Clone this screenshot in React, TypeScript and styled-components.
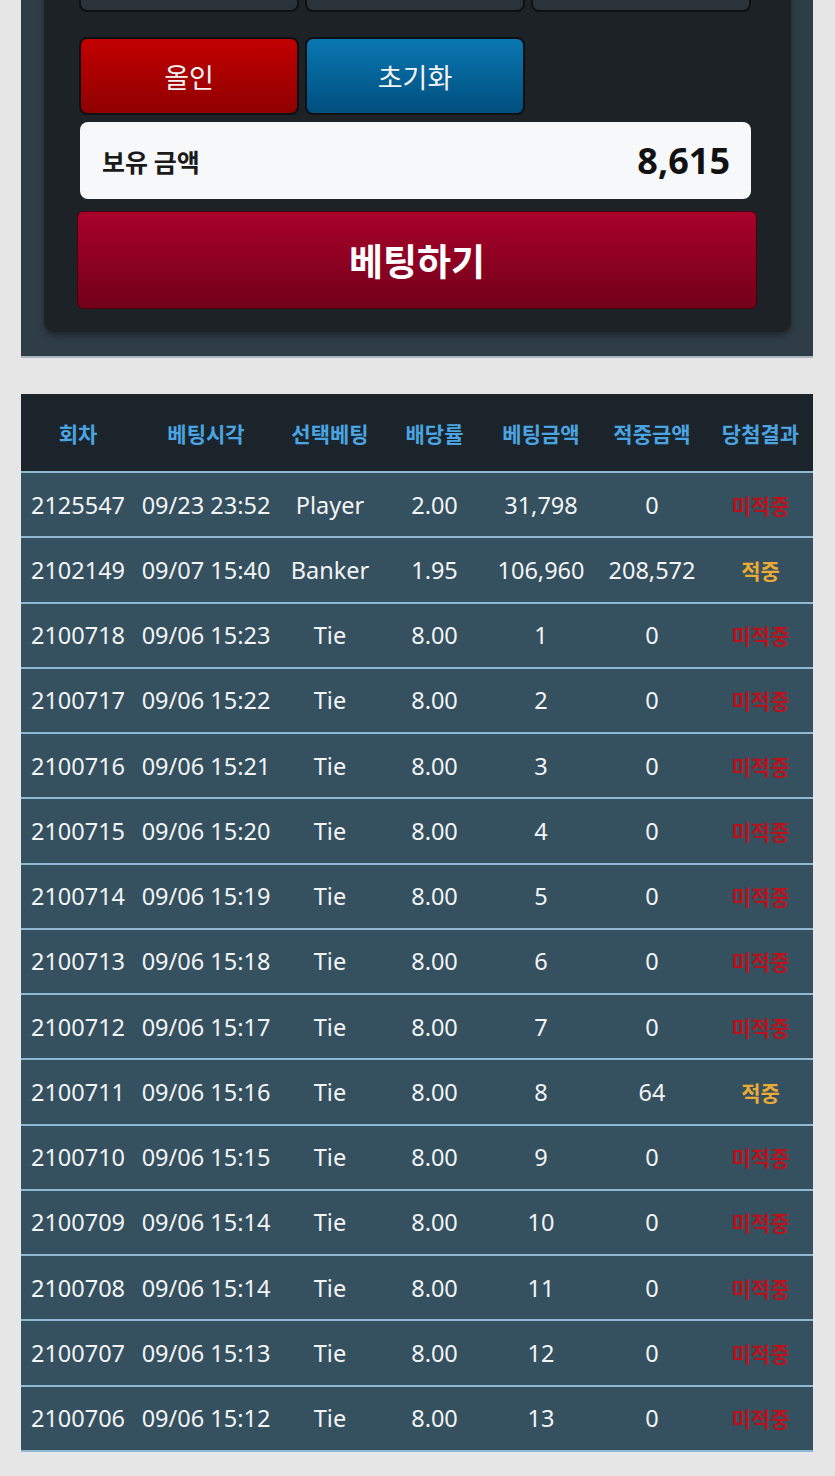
import React from "react";
import styled, { createGlobalStyle } from "styled-components";

const GlobalStyle = createGlobalStyle`
  body {
    margin: 0;
    background: #e6e6e6;
    font-family: "Noto Sans", "Noto Sans CJK KR", sans-serif;
  }
`;

const Page = styled.div`
  width: 835px;
  height: 1476px;
  overflow: hidden;
  padding: 0 22px 0 21px;
  box-sizing: border-box;
`;

const Panel = styled.div`
  background: #2f3d47;
  margin-top: -66px;
  padding: 0 22px 24px 23px;
  border-bottom: 2px solid #aab6be;
`;

const Card = styled.div`
  background: #1c2226;
  border-radius: 0 0 10px 10px;
  padding: 0 34px 23px 33px;
  box-shadow: 0 4px 6px rgba(0, 0, 0, 0.35);
  display: flex;
  flex-direction: column;
`;

const ButtonRow = styled.div<{ $mt: number }>`
  display: flex;
  gap: 6px;
  padding-left: 2px;
  margin-top: ${(p) => p.$mt}px;
`;

const ChipButton = styled.div<{ $variant: "chip" | "red" | "blue" }>`
  width: 220px;
  height: 78px;
  box-sizing: border-box;
  border-radius: 8px;
  border: 2px solid #0d1114;
  display: flex;
  align-items: center;
  justify-content: center;
  font-family: "Noto Sans CJK KR", sans-serif;
  font-size: 27px;
  color: #f4f4f4;
  background: ${(p) =>
    p.$variant === "red"
      ? "linear-gradient(#c30000, #8e0000)"
      : p.$variant === "blue"
      ? "linear-gradient(#0a77b2, #004f7e)"
      : "linear-gradient(#353d44, #2b3237)"};
`;

const Balance = styled.div`
  margin: 7px 6px 0 3px;
  height: 77px;
  background: #f7f8f9;
  border-radius: 8px;
  display: flex;
  align-items: center;
  justify-content: space-between;
  padding: 0 21px 0 22px;
`;

const BalanceLabel = styled.span`
  font-family: "Noto Sans CJK KR", sans-serif;
  font-weight: 700;
  font-size: 25px;
  color: #1a1a1a;
`;

const BalanceValue = styled.span`
  font-family: "Noto Sans", sans-serif;
  font-weight: 700;
  font-size: 36px;
  color: #111;
`;

const BetButton = styled.div`
  margin-top: 12px;
  height: 98px;
  box-sizing: border-box;
  border-radius: 6px;
  border: 1px solid #4a0010;
  background: linear-gradient(#a9022a, #72001a);
  display: flex;
  align-items: center;
  justify-content: center;
  font-family: "Noto Sans CJK KR", sans-serif;
  font-weight: 700;
  font-size: 37px;
  color: #fff;
`;

const Table = styled.table`
  margin-top: 36px;
  width: 792px;
  border-collapse: collapse;
  table-layout: fixed;
`;

const HeadCell = styled.th`
  height: 77px;
  background: #1b242a;
  color: #4ba4e2;
  font-family: "Noto Sans CJK KR", sans-serif;
  font-weight: 700;
  font-size: 21px;
  text-align: center;
  padding: 0;
  white-space: nowrap;
  border-bottom: 2px solid #8fb8d2;
`;

const Cell = styled.td`
  height: 63.25px;
  background: #35505f;
  color: #f2f4f6;
  font-family: "Noto Sans", "Noto Sans CJK KR", sans-serif;
  font-size: 23.5px;
  text-align: center;
  padding: 0;
  white-space: nowrap;
  border-bottom: 2px solid #8fb8d2;
`;

const Result = styled.span<{ $win: boolean }>`
  font-family: "Noto Sans CJK KR", sans-serif;
  font-weight: 700;
  font-size: 21px;
  color: ${(p) => (p.$win ? "#e9aa36" : "#b8131d")};
`;

const columns = [
  { title: "회차", width: 114 },
  { title: "베팅시각", width: 142 },
  { title: "선택베팅", width: 106 },
  { title: "배당률", width: 103 },
  { title: "베팅금액", width: 110 },
  { title: "적중금액", width: 112 },
  { title: "당첨결과", width: 105 },
];

const rows = [
  ["2125547", "09/23 23:52", "Player", "2.00", "31,798", "0", false],
  ["2102149", "09/07 15:40", "Banker", "1.95", "106,960", "208,572", true],
  ["2100718", "09/06 15:23", "Tie", "8.00", "1", "0", false],
  ["2100717", "09/06 15:22", "Tie", "8.00", "2", "0", false],
  ["2100716", "09/06 15:21", "Tie", "8.00", "3", "0", false],
  ["2100715", "09/06 15:20", "Tie", "8.00", "4", "0", false],
  ["2100714", "09/06 15:19", "Tie", "8.00", "5", "0", false],
  ["2100713", "09/06 15:18", "Tie", "8.00", "6", "0", false],
  ["2100712", "09/06 15:17", "Tie", "8.00", "7", "0", false],
  ["2100711", "09/06 15:16", "Tie", "8.00", "8", "64", true],
  ["2100710", "09/06 15:15", "Tie", "8.00", "9", "0", false],
  ["2100709", "09/06 15:14", "Tie", "8.00", "10", "0", false],
  ["2100708", "09/06 15:14", "Tie", "8.00", "11", "0", false],
  ["2100707", "09/06 15:13", "Tie", "8.00", "12", "0", false],
  ["2100706", "09/06 15:12", "Tie", "8.00", "13", "0", false],
] as const;

const App = () => {
  return (
    <Page>
      <GlobalStyle />
      <Panel>
        <Card>
          <ButtonRow $mt={0}>
            <ChipButton $variant="chip" />
            <ChipButton $variant="chip" />
            <ChipButton $variant="chip" />
          </ButtonRow>
          <ButtonRow $mt={25}>
            <ChipButton $variant="red">올인</ChipButton>
            <ChipButton $variant="blue">초기화</ChipButton>
          </ButtonRow>
          <Balance>
            <BalanceLabel>보유 금액</BalanceLabel>
            <BalanceValue>8,615</BalanceValue>
          </Balance>
          <BetButton>베팅하기</BetButton>
        </Card>
      </Panel>
      <Table>
        <colgroup>
          {columns.map((c) => (
            <col key={c.title} style={{ width: c.width }} />
          ))}
        </colgroup>
        <thead>
          <tr>
            {columns.map((c) => (
              <HeadCell key={c.title}>{c.title}</HeadCell>
            ))}
          </tr>
        </thead>
        <tbody>
          {rows.map((r) => (
            <tr key={r[0]}>
              <Cell>{r[0]}</Cell>
              <Cell>{r[1]}</Cell>
              <Cell>{r[2]}</Cell>
              <Cell>{r[3]}</Cell>
              <Cell>{r[4]}</Cell>
              <Cell>{r[5]}</Cell>
              <Cell>
                <Result $win={r[6]}>{r[6] ? "적중" : "미적중"}</Result>
              </Cell>
            </tr>
          ))}
        </tbody>
      </Table>
    </Page>
  );
};

export default App;
